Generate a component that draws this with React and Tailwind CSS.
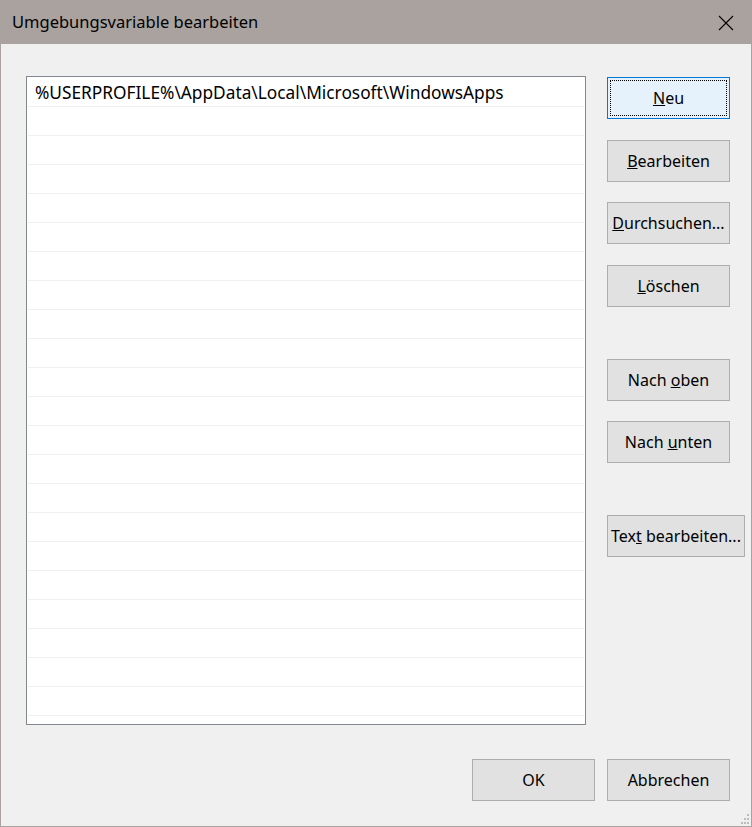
import React from "react";

const F = { fontFamily: '"Noto Sans", "Open Sans", sans-serif' };

function Btn({ children, className = "", focused = false }) {
  if (focused) {
    return (
      <div className={"h-[42px] w-[123px] border border-[#0078d7] bg-[#e5f1fb] p-[2px] " + className}>
        <div className="flex h-full w-full items-center justify-center border border-dotted border-black text-[16px] text-black">
          {children}
        </div>
      </div>
    );
  }
  return (
    <div className={"flex h-[42px] w-[123px] items-center justify-center border border-[#adadad] bg-[#e1e1e1] text-[16px] text-black whitespace-nowrap " + className}>
      {children}
    </div>
  );
}

export default function App() {
  const rows = Array.from({ length: 22 });
  return (
    <div style={F} className="relative flex h-[827px] w-[752px] flex-col border border-[#aaa29e] bg-[#f0f0f0]">
      <div className="flex h-[43px] shrink-0 items-center justify-between bg-[#aaa29e] pl-[11px] pr-[16px]">
        <span className="text-[16.5px] text-black">Umgebungsvariable bearbeiten</span>
        <svg width="16" height="16" viewBox="0 0 16 16" className="mr-[1px]">
          <path d="M1 1 L15 15 M15 1 L1 15" stroke="#000" strokeWidth="1.1" />
        </svg>
      </div>
      <div className="flex flex-1 flex-col">
        <div className="flex pl-[25px] pt-[32px]">
          <div className="h-[649px] w-[560px] border border-[#828790] bg-white p-[1px]">
            {rows.map((_, i) => (
              <div key={i} className="flex h-[29px] items-center border-b border-[#efefef] pl-[7px] pt-[2px] text-[17.3px] text-black">
                {i === 0 ? "%USERPROFILE%\\AppData\\Local\\Microsoft\\WindowsApps" : ""}
              </div>
            ))}
          </div>
          <div className="ml-[21px] flex flex-col pt-[1px]">
            <Btn focused>
              <span><u>N</u>eu</span>
            </Btn>
            <Btn className="mt-[21px]"><span><u>B</u>earbeiten</span></Btn>
            <Btn className="mt-[20px]"><span><u>D</u>urchsuchen...</span></Btn>
            <Btn className="mt-[21px]"><span><u>L</u>öschen</span></Btn>
            <Btn className="mt-[52px]"><span>Nach <u>o</u>ben</span></Btn>
            <Btn className="mt-[20px]"><span>Nach <u>u</u>nten</span></Btn>
            <Btn className="mt-[52px] w-[138px]"><span>Tex<u>t</u> bearbeiten...</span></Btn>
          </div>
        </div>
        <div className="mt-[34px] flex justify-end gap-[12px] pr-[21px]">
          <Btn>OK</Btn>
          <Btn>Abbrechen</Btn>
        </div>
      </div>
      <svg className="absolute bottom-[1px] right-[1px]" width="12" height="12" viewBox="0 0 12 12">
        <rect x="9" y="1" width="2" height="2" fill="#bcbcbc" />
        <rect x="6" y="5" width="2" height="2" fill="#bcbcbc" />
        <rect x="9" y="5" width="2" height="2" fill="#bcbcbc" />
        <rect x="3" y="9" width="2" height="2" fill="#bcbcbc" />
        <rect x="6" y="9" width="2" height="2" fill="#bcbcbc" />
        <rect x="9" y="9" width="2" height="2" fill="#bcbcbc" />
      </svg>
    </div>
  );
}
